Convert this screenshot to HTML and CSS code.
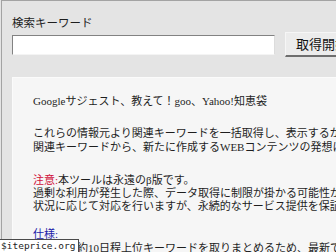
FILE: index.html
```html
<!DOCTYPE html>
<html lang="ja">
<head>
  <meta charset="UTF-8">
  <meta name="viewport" content="width=device-width, initial-scale=1.0">
  <title>関連キーワード取得ツール</title>
  <link rel="stylesheet" href="styles.css">
</head>
<body>
  <!-- 検索フォーム -->
  <div class="panel">
    <div class="label">検索キーワード</div>
    <form class="search-row">
      <input class="keyword" type="text" name="q">
      <button class="submit" type="button">取得開始</button>
    </form>

    <!-- 説明 -->
    <div class="info">
      <p class="lead">Googleサジェスト、教えて！goo、Yahoo!知恵袋</p>
      <p class="para">これらの情報元より関連キーワードを一括取得し、表示するかたちで<br>関連キーワードから、新たに作成するWEBコンテンツの発想に役立ててください。</p>
      <p class="note"><span class="warn">注意:</span>本ツールは永遠のβ版です。<br>過剰な利用が発生した際、データ取得に制限が掛かる可能性があります。<br>状況に応じて対応を行いますが、永続的なサービス提供を保証するものではありません。</p>
      <p class="para spec-block"><span class="spec">仕様:</span><br>データは約10日程上位キーワードを取りまとめるため、最新ではない場合があります。</p>
    </div>
  </div>

  <div class="badge">$iteprice.org</div>
</body>
</html>
```

FILE: styles.css
```css
html, body {
  margin: 0;
  height: 100%;
  overflow: hidden;
}

body {
  background-color: #e4e4e4;
  font-family: "Liberation Serif", "Noto Sans CJK JP", serif;
  color: #1e1e1e;
}

.panel {
  margin-left: 1px;
  height: 100%;
  border-top: 1px solid #a3a3a3;
  border-left: 1px solid #a3a3a3;
  padding-top: 14px;
  padding-left: 10px;
  box-sizing: border-box;
  overflow: hidden;
}

.label {
  font-family: "Noto Sans CJK JP", sans-serif;
  font-size: 11.5px;
  line-height: 14px;
}

.search-row {
  display: flex;
  align-items: flex-start;
  margin: 3px 0 0;
}

.keyword {
  flex: none;
  width: 263px;
  height: 20px;
  margin: 3px 0 0;
  padding: 0 3px;
  box-sizing: border-box;
  background: #fff;
  border-style: solid;
  border-width: 1px;
  border-color: #828282 #dcdcdc #f4f4f4 #828282;
  outline: none;
}

.submit {
  flex: none;
  margin-left: 10px;
  height: 25px;
  width: 90px;
  padding: 0 0 0 10px;
  text-align: left;
  background: #ececec;
  border-style: solid;
  border-width: 1px 1px 2px 1px;
  border-color: #f6f6f6 #8a8a8a #6e6e6e #f6f6f6;
  font-family: "Noto Sans CJK JP", sans-serif;
  font-size: 13px;
  line-height: 20px;
  color: #111;
  white-space: nowrap;
}

.info {
  margin-top: 20px;
  height: 175px;
  box-sizing: border-box;
  background: #f6f6f6;
  border-top: 1px solid #fbfbfb;
  border-left: 1px solid #fbfbfb;
  padding: 16px 0 0 20px;
  font-size: 11px;
  line-height: 14px;
  white-space: nowrap;
  overflow: hidden;
}

.info p {
  margin: 0;
}

.para {
  margin-top: 18px !important;
}

.note {
  margin-top: 20px !important;
  line-height: 13px;
}

.spec-block {
  margin-top: 14px !important;
}

.warn {
  color: #d0103a;
}

.spec {
  color: #1c1ca8;
}

.badge {
  position: absolute;
  left: 0;
  bottom: 0;
  height: 12px;
  padding: 0 3px 0 1px;
  background: #fff;
  border-top: 1px solid #4a4a4a;
  border-right: 1px solid #4a4a4a;
  font-family: "DejaVu Sans Mono", monospace;
  font-size: 9.5px;
  line-height: 12px;
  color: #222;
}
```
